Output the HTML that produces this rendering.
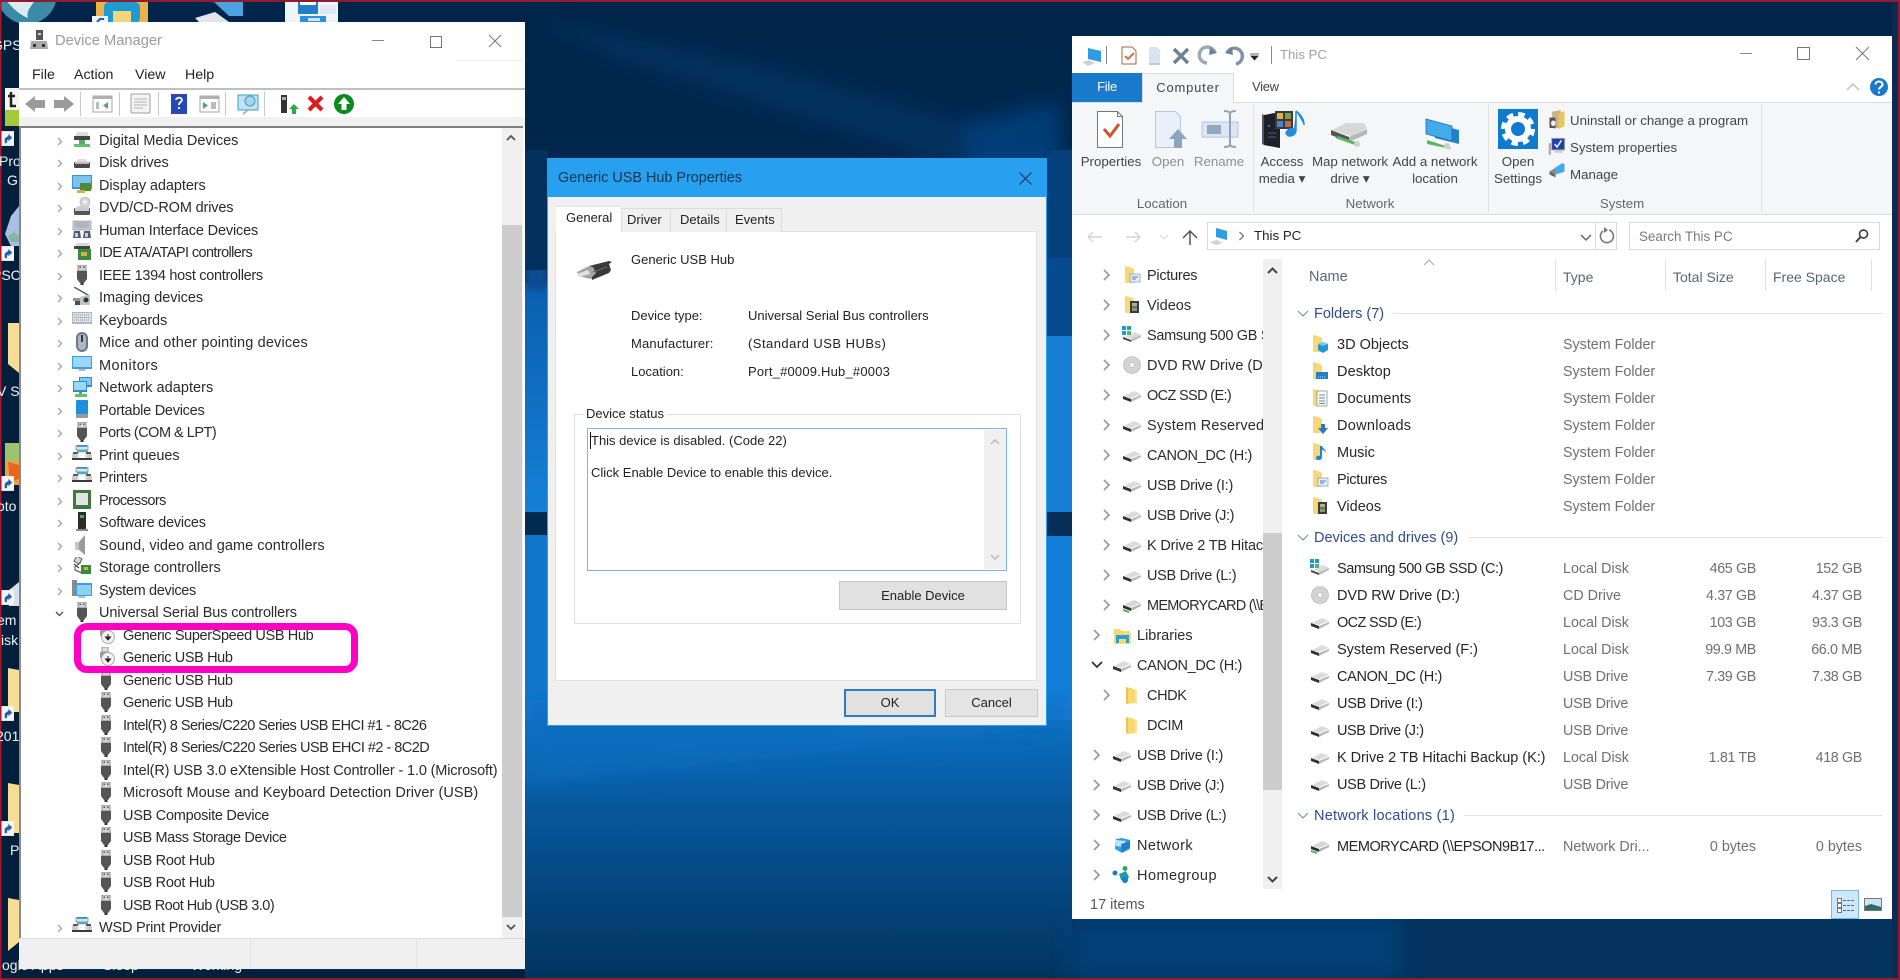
<!DOCTYPE html>
<html><head><meta charset="utf-8"><title>Device Manager</title>
<style>
html,body{margin:0;padding:0;width:1900px;height:980px;overflow:hidden;background:#02244a;font-family:"Liberation Sans",sans-serif}
.p{position:absolute}
.t{position:absolute;white-space:nowrap;line-height:20px;height:20px}
svg{position:absolute;overflow:visible}
#tree{position:absolute;left:0;top:129.75px;width:502px;height:809px;overflow:hidden;font-size:14.5px;color:#2a2a2a}
.r{position:relative;height:22.5px;line-height:22.5px;white-space:nowrap}
.r span{position:absolute;left:99px;top:0}
.r.k span{left:123px}
.r svg.c{left:57px;top:7px;width:6px;height:9px}
.r svg.i{left:72px;top:0;width:20px;height:20px}
.r.k svg.i{left:96px}
#nav{position:absolute;left:1072px;top:261px;width:191px;height:628px;overflow:hidden;font-size:14.5px;color:#2b2b2b}
.n{position:relative;height:30px;line-height:30px;white-space:nowrap}
.n span{position:absolute;left:75px;top:0}
.n svg.c{left:31px;top:8px;width:8px;height:12px}
.n svg.i{left:50px;top:4px;width:20px;height:20px}
.n.s span{left:65px}.n.s svg.c{left:21px}.n.s svg.i{left:40px}
.rb{font-size:13.3px;color:#444;text-align:center}
.dis{color:#8f8f8f}
.hd{font-size:14px;color:#56677a}
.grp{font-size:14.5px;color:#2f4b8c}
.it{font-size:14.5px;color:#262626;left:1337px}
.ty{font-size:14.3px;color:#6f6f6f;left:1563px}
.sz{font-size:14.3px;color:#6f6f6f;text-align:right;width:80px;left:1676px;letter-spacing:-.35px}
.fr{font-size:14.3px;color:#6f6f6f;text-align:right;width:80px;left:1782px;letter-spacing:-.35px}
.ln{position:absolute;height:1px;background:#e3e3e3}
.de{font-size:14px;color:#f2f2f2}
.d{font-size:13px;color:#222}
</style></head><body>

<!-- Wallpaper -->
<svg style="left:0;top:0" width="1900" height="980" viewBox="0 0 1900 980">
<defs>
<linearGradient id="bg" x1="0" y1="0" x2="0" y2="1"><stop offset="0" stop-color="#01254a"/><stop offset="1" stop-color="#033058"/></linearGradient>
<linearGradient id="pane" x1="0" y1="0" x2="0" y2="1"><stop offset="0" stop-color="#0a5eae"/><stop offset="1" stop-color="#1580d8"/></linearGradient>
<linearGradient id="low" x1="0" y1="0" x2="0" y2="1"><stop offset="0" stop-color="#0d70c2"/><stop offset=".35" stop-color="#07569a"/><stop offset="1" stop-color="#03335f"/></linearGradient>
<filter id="bl"><feGaussianBlur stdDeviation="10"/></filter>
<filter id="bl2"><feGaussianBlur stdDeviation="3"/></filter>
<symbol id="sc" viewBox="0 0 14 16"><rect width="14" height="16" fill="#f4f4f4"/><path d="M4 13V8l4-3V3l4 4-4 4V8.500L6.500 10.500V13z" fill="#1e5fb0"/></symbol>
<symbol id="ch" viewBox="0 0 6 9"><path d="M1 1l3.500 3.500L1 8" fill="none" stroke="#a6a6a6" stroke-width="1.400"/></symbol>
<symbol id="chd" viewBox="0 0 9 6"><path d="M1 1l3.500 3.500L8 1" fill="none" stroke="#555" stroke-width="1.400"/></symbol>
<symbol id="ch2" viewBox="0 0 8 12"><path d="M1 1l5 5-5 5" fill="none" stroke="#9c9c9c" stroke-width="1.800"/></symbol>
<symbol id="usb" viewBox="0 0 20 20"><rect x="6" y="0" width="8" height="6" fill="#d4d4d4" stroke="#777" stroke-width=".8"/><rect x="7.500" y="1.500" width="1.500" height="1.500" fill="#555"/><rect x="11" y="1.500" width="1.500" height="1.500" fill="#555"/><path d="M5 6h10v8l-3 4H8l-3-4z" fill="#555"/><rect x="8.500" y="18" width="3" height="2" fill="#333"/></symbol>
<symbol id="usbd" viewBox="0 0 20 20"><rect x="6" y="0" width="6" height="5" fill="#ddd" stroke="#888" stroke-width=".8"/><path d="M4 5h10v6H4z" fill="#9a9a9a"/><circle cx="12" cy="12" r="6.500" fill="#f2f2f2" stroke="#aaa"/><path d="M12 9v4M9.500 12h5l-2.500 3z" fill="#222" stroke="#222" stroke-width="1"/></symbol>
<symbol id="dig" viewBox="0 0 20 20"><path d="M3 6l2-4h10l2 4z" fill="#dcdcdc"/><rect x="2" y="6" width="16" height="4" fill="#444"/><rect x="7" y="10" width="6" height="4" fill="#50b060"/><rect x="2" y="14" width="16" height="3" fill="#62c070"/></symbol>
<symbol id="dsk" viewBox="0 0 20 20"><path d="M4 10l2-3h8l2 3z" fill="#dcdcdc"/><rect x="2" y="10" width="16" height="6" rx="1" fill="#4a4a4a"/><rect x="3" y="10" width="14" height="2" fill="#bbb"/></symbol>
<symbol id="dis" viewBox="0 0 20 20"><rect x="0" y="0" width="20" height="14" fill="#3a93d8"/><rect x="1" y="1" width="18" height="11" fill="#7cc4ee"/><rect x="8" y="8" width="11" height="8" fill="#4f8a3a"/><rect x="5" y="15" width="8" height="3" fill="#d7b048"/></symbol>
<symbol id="dvd" viewBox="0 0 20 20"><circle cx="13" cy="5" r="5" fill="#d7d7d7" stroke="#aaa" stroke-width=".6"/><circle cx="13" cy="5" r="1.500" fill="#fff"/><path d="M4 11l2-2h10l2 2z" fill="#cfcfcf"/><rect x="2" y="11" width="16" height="7" rx="1" fill="#555"/><rect x="3" y="11" width="14" height="3" fill="#ccc"/></symbol>
<symbol id="hid" viewBox="0 0 20 20"><rect x="1" y="1" width="18" height="9" fill="#c9ced6" stroke="#889" stroke-width=".6"/><path d="M3 3h14M3 5h14M3 7h14" stroke="#889" stroke-width=".8"/><path d="M1 18l1-7h6l1 7zM11 18l1-7h6l1 7z" fill="#4b5d73"/><rect x="3" y="13" width="3" height="4" fill="#c5d2e2"/><rect x="13" y="13" width="3" height="4" fill="#c5d2e2"/></symbol>
<symbol id="ide" viewBox="0 0 20 20"><path d="M3 4l2-3h12l1 3z" fill="#d9d9d9"/><rect x="2" y="4" width="16" height="3" fill="#444"/><rect x="6" y="7" width="13" height="11" fill="#3d8a3c"/><rect x="9" y="10" width="6" height="4" fill="#d0b14b"/></symbol>
<symbol id="img" viewBox="0 0 20 20"><path d="M2 0l14 8" stroke="#555" stroke-width="1.300"/><path d="M8 10l10-3v11H8z" fill="#bfc5cc"/><circle cx="14" cy="13" r="2.500" fill="#333"/><rect x="1" y="11" width="7" height="3" fill="#8c97a3"/><rect x="3" y="14" width="5" height="4" fill="#46505a"/></symbol>
<symbol id="kbd" viewBox="0 0 20 20"><rect x="0" y="2" width="20" height="12" fill="#aeb6c0"/><rect x="1" y="3" width="18" height="9" fill="#e0e4e9"/><path d="M2 5h16M2 7.500h16M2 10h16" stroke="#8b95a0" stroke-dasharray="1.200 .8"/></symbol>
<symbol id="mse" viewBox="0 0 20 20"><rect x="4" y="0" width="12" height="20" rx="6" fill="#6c7783"/><rect x="6" y="2" width="8" height="16" rx="4" fill="#aeb8c4"/><rect x="9" y="3" width="2" height="7" fill="#2f3a48"/></symbol>
<symbol id="mon" viewBox="0 0 20 20"><rect x="0" y="1" width="20" height="13" fill="#3a9ee0"/><rect x="1" y="2" width="18" height="10" fill="#9ad8f6"/><path d="M7 14h6l1 2H6z" fill="#bbb"/></symbol>
<symbol id="net" viewBox="0 0 20 20"><rect x="7" y="0" width="13" height="10" fill="#2f8dd5"/><rect x="8" y="1" width="11" height="7" fill="#84c8f0"/><rect x="1" y="4" width="14" height="11" fill="#2f8dd5"/><rect x="2" y="5" width="12" height="8" fill="#9ad8f6"/><rect x="3" y="17" width="12" height="3" fill="#62c070"/><rect x="7" y="15" width="3" height="2" fill="#888"/></symbol>
<symbol id="por" viewBox="0 0 20 20"><rect x="4" y="0" width="12" height="18" rx="1" fill="#1f8fe0"/><rect x="4" y="14" width="12" height="4" fill="#999"/></symbol>
<symbol id="prt" viewBox="0 0 20 20"><rect x="4" y="0" width="12" height="5" fill="#dbe2ea" stroke="#667" stroke-width=".6"/><path d="M5 1h10" stroke="#1f8ec6" stroke-width="1.500"/><rect x="5" y="5" width="11" height="2" fill="#40b1cf"/><rect x="1" y="7" width="5" height="2" fill="#555"/><rect x="14" y="7" width="5" height="2" fill="#555"/><rect x="6" y="7" width="8" height="7" fill="#fff" stroke="#888" stroke-width=".5"/><rect x="0" y="9" width="5" height="6" fill="#cbcbcb"/><rect x="15" y="9" width="5" height="6" fill="#cbcbcb"/><rect x="0" y="13" width="20" height="2" fill="#3b3b3b"/></symbol>
<symbol id="cpu" viewBox="0 0 20 20"><rect x="1" y="0" width="18" height="19" fill="#3e7a3d"/><rect x="4" y="3" width="12" height="12" fill="#e1e4e3"/></symbol>
<symbol id="sft" viewBox="0 0 20 20"><rect x="6" y="0" width="8" height="17" fill="#2b2b2b"/><rect x="8" y="3" width="4" height="3" fill="#4ab04a"/><rect x="4" y="17" width="12" height="2" fill="#888"/></symbol>
<symbol id="snd" viewBox="0 0 20 20"><path d="M3 7h4l6-7v20l-6-5H3z" fill="#c5c5c5"/><path d="M7 7l6-7v20l-6-5z" fill="#9a9a9a"/></symbol>
<symbol id="sto" viewBox="0 0 20 20"><rect x="3" y="0" width="6" height="6" transform="rotate(30 6 3)" fill="#d5d5d5" stroke="#444" stroke-width=".8"/><path d="M2 7l5 4" stroke="#444" stroke-width="1.200"/><path d="M9 5l-6 5v3l7 3" fill="none" stroke="#666" stroke-width="1.300"/><rect x="9" y="8" width="10" height="9" fill="#3d8a3c"/><rect x="12" y="10" width="4" height="3" fill="#d0b14b"/></symbol>
<symbol id="sys" viewBox="0 0 20 20"><rect x="0" y="0" width="5" height="16" fill="#8a8a8a"/><rect x="4" y="3" width="16" height="13" fill="#3a9ee0"/><rect x="5" y="5" width="14" height="10" fill="#8cd0f2"/><path d="M7 16h6l1 2H6z" fill="#bbb"/></symbol>
<symbol id="drv" viewBox="0 0 20 20"><path d="M2 11l10-5 7 3-10 4z" fill="#dcdcdc"/><path d="M1 11l8 3v3l-8-3z" fill="#303030"/><path d="M9 14l10-4v2l-10 5z" fill="#b8b8b8"/></symbol>
<symbol id="drvn" viewBox="0 0 20 20"><path d="M2 10l10-5 7 3-10 4z" fill="#d6d6d6"/><path d="M1 10l8 3v3l-8-3z" fill="#303030"/><path d="M9 13l10-4v2l-10 5z" fill="#b0b0b0"/><path d="M1 14l6 2v2l-6-2z" fill="#4fae55"/></symbol>
<symbol id="sam" viewBox="0 0 20 20"><path d="M3 12l10-5 6 3-10 4z" fill="#dcdcdc"/><path d="M1 12l8 3v2l-8-3z" fill="#444"/><path d="M9 14l10-4v2l-10 5z" fill="#bbb"/><rect x="0" y="1" width="4" height="4" fill="#1d9ad6"/><rect x="5" y="1" width="4" height="4" fill="#1d9ad6"/><rect x="0" y="6" width="4" height="4" fill="#1d9ad6"/><rect x="5" y="6" width="4" height="4" fill="#4cba6a"/></symbol>
<symbol id="cd" viewBox="0 0 20 20"><circle cx="10" cy="10" r="8.500" fill="#d3d3d3" stroke="#b0b0b0" stroke-width=".6"/><circle cx="10" cy="10" r="2.500" fill="#f5f5f5" stroke="#aaa" stroke-width=".5"/></symbol>
<symbol id="fld" viewBox="0 0 20 20"><path d="M4 2l5 1 5 2v13l-9 1-1-1z" fill="#f6d877"/><path d="M4 2v16l2 1V3z" fill="#efc14d"/><path d="M13 5h2v13h-2z" fill="#f9e59c"/></symbol>
<symbol id="fp" viewBox="0 0 20 20"><path d="M3 1l5 1 4 2v14H4l-1-1z" fill="#f6d877"/><rect x="8" y="9" width="10" height="8" fill="#e9eef5" stroke="#8296ad" stroke-width=".7"/><path d="M10 12h6M10 14h4" stroke="#4a7fb6"/></symbol>
<symbol id="fv" viewBox="0 0 20 20"><path d="M3 1l5 1 4 2v14H4l-1-1z" fill="#f6d877"/><rect x="8" y="6" width="9" height="12" fill="#3c3c3c"/><rect x="10" y="8" width="5" height="3.500" fill="#a5b28c"/><rect x="10" y="12.500" width="5" height="3.500" fill="#869b6b"/></symbol>
<symbol id="f3" viewBox="0 0 20 20"><path d="M3 1l5 1 4 2v14H4l-1-1z" fill="#f6d877"/><path d="M8 10l5-2 5 2v6l-5 3-5-3z" fill="#1e97d6"/><path d="M8 10l5-2 5 2-5 2z" fill="#76cbee"/></symbol>
<symbol id="fd" viewBox="0 0 20 20"><path d="M3 1l5 1 4 2v14H4l-1-1z" fill="#f6d877"/><rect x="6" y="11" width="12" height="7" fill="#1d81cf"/><path d="M8 16h8" stroke="#cde" stroke-dasharray="1 1"/></symbol>
<symbol id="fdoc" viewBox="0 0 20 20"><path d="M3 1l5 1 4 2v14H4l-1-1z" fill="#f6d877"/><rect x="7" y="3" width="10" height="15" fill="#fff" stroke="#8e8e8e" stroke-width=".8"/><path d="M9 7h6M9 10h6M9 13h6M9 15.500h6" stroke="#5e84a8"/></symbol>
<symbol id="fdn" viewBox="0 0 20 20"><path d="M3 1l5 1 4 2v14H4l-1-1z" fill="#f6d877"/><path d="M11 9h4v4h3l-5 6-5-6h3z" fill="#2b78c5"/></symbol>
<symbol id="fm" viewBox="0 0 20 20"><path d="M3 1l5 1 4 2v14H4l-1-1z" fill="#f6d877"/><path d="M10 4h2c1 3 4 3 4 7-1-2-2-3-4-3v7c0 2-2 3-4 3-1.500 0-2-1-2-2 0-2 3-3 4-2z" fill="#1f83d8"/></symbol>
</defs>
<rect width="1900" height="980" fill="url(#bg)"/>
<path d="M520 15L780 70 1060 150 1060 200 860 135 620 60z" fill="#0a4e90" opacity=".28" filter="url(#bl)"/>
<path d="M960 125L1060 100V280H1000z" fill="#04437f" opacity=".8" filter="url(#bl)"/>
<path d="M525 283H548V512H525z" fill="url(#pane)"/>
<path d="M525 535H548V760H525z" fill="#1076cc"/>
<path d="M525 262H548V290H525z" fill="#074c92" filter="url(#bl2)"/>
<path d="M525 150H548V270H525z" fill="#03315e"/>
<path d="M1047 150H1073V260H1047z" fill="#05407c"/>
<path d="M1047 258H1073V336H1047z" fill="#074a8e"/>
<path d="M1047 336H1073V512H1047z" fill="#1780d6"/>
<path d="M1047 536H1073V720H1047z" fill="#137ed8"/>
<path d="M1047 512H1073V536H1047z" fill="#062e56"/>
<rect x="525" y="720" width="548" height="260" fill="url(#low)"/>
<path d="M525 785L1072 725V700H525z" fill="#0c6dc0" opacity=".7" filter="url(#bl)"/>
<path d="M1072 915H1892V980H1072z" fill="#04335f"/>
<path d="M1072 915H1400V980H1072z" fill="#054480" opacity=".7" filter="url(#bl)"/>
<path d="M1892 0H1900V980H1892z" fill="#0a2c54"/>
<path d="M0 0H19V980H0z" fill="#02203c"/>
<rect x="0" y="970" width="525" height="10" fill="#02203c"/>
<circle cx="27" cy="-6" r="30" fill="#3d8aa8"/><path d="M6 0c6 8 14 15 22 18-2-7 3-11 7-18z" fill="#dcebf0"/>
<rect x="96" y="0" width="52" height="23" fill="#eeb24a"/><rect x="104" y="2" width="36" height="21" rx="5" fill="#1e9bd0"/><rect x="113" y="11" width="18" height="12" fill="#f3d67b"/>
<rect x="92" y="16" width="16" height="7" fill="#eef2f7"/><path d="M97 22l3-3h4" stroke="#1e5fb0" stroke-width="2" fill="none"/>
<path d="M212 0h31v16h-14z" fill="#4ba4e0"/><path d="M195 18l20-6 14 10H199z" fill="#e2e6ea"/>
<rect x="285" y="0" width="53" height="23" fill="#f0f3f7"/><rect x="298" y="0" width="20" height="14" fill="#1f7fc8"/><rect x="300" y="2" width="16" height="3" fill="#fff"/><rect x="320" y="5" width="16" height="9" fill="#dfe8f2"/><rect x="300" y="16" width="26" height="7" fill="#2a92dc"/><rect x="308" y="18" width="12" height="3" fill="#cfe6f8"/>
<rect x="5" y="88" width="14" height="22" fill="#f5f5f0"/><rect x="5" y="110" width="14" height="16" fill="#a3c83c"/>
<path d="M11 92v14h5M8 96h7" stroke="#222" stroke-width="2.500" fill="none"/>
<use href="#sc" x="1" y="131" width="13" height="15"/>
<path d="M19 206l-8 10-6 18 6 12h8z" fill="#aabfe6"/><path d="M8 236l6-4 5 4v6h-8z" fill="#84b89c"/>
<use href="#sc" x="1" y="246" width="13" height="15"/>
<path d="M8 323h11v50l-11-9z" fill="#f5dd94"/>
<rect x="5" y="443" width="14" height="42" fill="#e8a04a"/><rect x="5" y="443" width="14" height="18" fill="#9cc36e"/><path d="M8 462l11 3v14l-9 3z" fill="#e9661f"/>
<use href="#sc" x="1" y="476" width="13" height="15"/>
<path d="M19 582L9 590v16h10z" fill="#d5dfec"/>
<use href="#sc" x="1" y="590" width="13" height="15"/>
<path d="M8 668l11 2v42H8z" fill="#f5dd94"/><use href="#sc" x="1" y="706" width="13" height="15"/>
<path d="M8 783l11 2v48H8z" fill="#f5dd94"/><use href="#sc" x="1" y="821" width="13" height="15"/>
<path d="M8 898l11 2v42l-11 9z" fill="#f5dd94"/>
<rect x="0" y="0" width="1900" height="2" fill="#8c1c30"/>
<rect x="0" y="978" width="1900" height="2" fill="#8c1c30"/>
<rect x="0" y="0" width="1.500" height="980" fill="#a8152c"/>
<rect x="1898" y="0" width="2" height="980" fill="#8c1c30"/>
</svg>

<!-- Desktop labels -->
<div class="t de" style="left:-8px;top:35px">GPS</div>
<div class="t de" style="left:-1px;top:151px">Pro</div>
<div class="t de" style="left:7px;top:170px">G</div>
<div class="t de" style="left:-8px;top:265px">PSC</div>
<div class="t de" style="left:-3px;top:381px">V S</div>
<div class="t de" style="left:-3px;top:496px">oto</div>
<div class="t de" style="left:-3px;top:610px">em</div>
<div class="t de" style="left:1px;top:630px">isk</div>
<div class="t de" style="left:-4px;top:726px">201</div>
<div class="t de" style="left:10px;top:840px">P</div>
<div class="t de" style="left:2px;top:955px">ogle Apps</div>
<div class="t de" style="left:103px;top:955px">Sleep</div>
<div class="t de" style="left:191px;top:955px">Working</div>

<!-- Device Manager -->
<div class="p" style="left:19px;top:22px;width:506px;height:947px;background:#fff"></div>
<div class="p" style="left:19px;top:117px;width:506px;height:9px;background:#f1f1f1"></div>
<div class="p" style="left:19px;top:88px;width:506px;height:2px;background:#c0c0c0"></div>
<div class="p" style="left:21px;top:126px;width:502px;height:2px;background:#808080"></div>
<div class="p" style="left:19px;top:126px;width:2px;height:812px;background:#8a8a8a"></div>
<div class="p" style="left:456px;top:60px;width:69px;height:1px;background:#eee"></div>
<div class="p" style="left:19px;top:938px;width:506px;height:31px;background:#f0f0f0;border-top:1px solid #dcdcdc;box-sizing:border-box"></div>
<div class="p" style="left:250px;top:940px;width:1px;height:28px;background:#e2e2e2"></div>
<div class="p" style="left:416px;top:940px;width:1px;height:28px;background:#e2e2e2"></div>
<div class="p" style="left:502px;top:128px;width:21px;height:810px;background:#f0f0f0"></div>
<div class="p" style="left:502px;top:225px;width:20px;height:692px;background:#cdcdcd"></div>
<svg style="left:505px;top:134px" width="12" height="8"><path d="M2 6l4-4 4 4" fill="none" stroke="#555" stroke-width="1.800"/></svg>
<svg style="left:505px;top:923px" width="12" height="8"><path d="M2 2l4 4 4-4" fill="none" stroke="#555" stroke-width="1.800"/></svg>
<div class="t" style="left:55px;top:31px;font-size:14.7px;color:#9b9b9b">Device Manager</div>
<svg style="left:29px;top:30px" width="20" height="21" viewBox="0 0 20 21"><rect x="7" y="0" width="7" height="10" fill="#555"/><rect x="9" y="3" width="3" height="2" fill="#ccc"/><path d="M2 11h16l1 8H1z" fill="#aaa"/><rect x="4" y="14" width="3" height="3" fill="#333"/><rect x="13" y="14" width="3" height="3" fill="#333"/></svg>
<svg style="left:372px;top:34px" width="150" height="16"><path d="M0 6.500h12" stroke="#888"/><rect x="58.500" y="2.500" width="11" height="11" fill="none" stroke="#777"/><path d="M117 1l12 12M129 1l-12 12" stroke="#777"/></svg>
<div class="t" style="left:32px;top:65px;font-size:14.2px;color:#222">File</div>
<div class="t" style="left:74px;top:65px;font-size:14.2px;color:#222">Action</div>
<div class="t" style="left:135px;top:65px;font-size:14.2px;color:#222">View</div>
<div class="t" style="left:185px;top:65px;font-size:14.2px;color:#222">Help</div>
<svg style="left:19px;top:90px" width="400" height="28" viewBox="0 0 400 28">
<path d="M6 14l10-8v4h10v8H16v4z" fill="#9b9b9b"/><path d="M55 14L45 6v4H35v8h10v4z" fill="#9b9b9b"/>
<path d="M61.500 2v24M100.500 2v24M139.500 2v24M206.500 2v24M245.500 2v24" stroke="#c8c8c8"/>
<rect x="74" y="6" width="19" height="16" fill="#fff" stroke="#a5a5a5"/><rect x="74" y="6" width="19" height="3" fill="#b0b0b0"/><path d="M77 12h3v7h-3z" fill="#bbb"/><path d="M89 12v7l-5-3.500z" fill="#4faa58"/>
<rect x="112" y="4" width="19" height="19" rx="1" fill="#f4f4f4" stroke="#9e9e9e"/><path d="M115 9h13M115 12h13M115 15h13M115 18h9" stroke="#b3b3b3"/>
<rect x="152" y="4" width="16" height="20" fill="#2649b5"/><path d="M157 10c0-3 6-3 6 0 0 2-3 2-3 5M160 17v2" stroke="#fff" stroke-width="1.800" fill="none"/>
<rect x="181" y="6" width="19" height="16" fill="#fff" stroke="#a5a5a5"/><rect x="181" y="6" width="19" height="3" fill="#b0b0b0"/><path d="M184 12v7l5-3.500z" fill="#4faa58"/><path d="M192 12h5v7h-5z" fill="#bbb"/>
<rect x="219" y="5" width="20" height="15" fill="#bfe3f5" stroke="#3e9bcf"/><circle cx="231" cy="11" r="5" fill="#a4d4ee" stroke="#3e9bcf"/><path d="M224 24l5-4h9" stroke="#9aa" stroke-width="1.500" fill="none"/>
<rect x="262" y="5" width="6" height="18" fill="#333"/><rect x="263" y="7" width="4" height="3" fill="#8bc58a"/><path d="M270 19l5-5 5 5h-3v5h-4v-5z" fill="#2fa84f"/>
<path d="M290 7l13 13M303 7l-13 13" stroke="#d81e1e" stroke-width="4.200"/>
<circle cx="325" cy="14" r="10" fill="#0a8a1f"/><path d="M325 7l6 7h-3.500v6h-5v-6H319z" fill="#fff"/>
</svg>

<div id="tree">
<div class="r"><svg class="c"><use href="#ch"/></svg><svg class="i"><use href="#dig"/></svg><span>Digital Media Devices</span></div>
<div class="r"><svg class="c"><use href="#ch"/></svg><svg class="i"><use href="#dsk"/></svg><span style="letter-spacing:-.12px">Disk drives</span></div>
<div class="r"><svg class="c"><use href="#ch"/></svg><svg class="i"><use href="#dis"/></svg><span style="letter-spacing:-.08px">Display adapters</span></div>
<div class="r"><svg class="c"><use href="#ch"/></svg><svg class="i"><use href="#dvd"/></svg><span style="letter-spacing:-.15px">DVD/CD-ROM drives</span></div>
<div class="r"><svg class="c"><use href="#ch"/></svg><svg class="i"><use href="#hid"/></svg><span style="letter-spacing:-.16px">Human Interface Devices</span></div>
<div class="r"><svg class="c"><use href="#ch"/></svg><svg class="i"><use href="#ide"/></svg><span style="letter-spacing:-.6px">IDE ATA/ATAPI controllers</span></div>
<div class="r"><svg class="c"><use href="#ch"/></svg><svg class="i"><use href="#usb"/></svg><span style="letter-spacing:-.3px">IEEE 1394 host controllers</span></div>
<div class="r"><svg class="c"><use href="#ch"/></svg><svg class="i"><use href="#img"/></svg><span style="letter-spacing:-.05px">Imaging devices</span></div>
<div class="r"><svg class="c"><use href="#ch"/></svg><svg class="i"><use href="#kbd"/></svg><span style="letter-spacing:-.14px">Keyboards</span></div>
<div class="r"><svg class="c"><use href="#ch"/></svg><svg class="i"><use href="#mse"/></svg><span style="letter-spacing:.16px">Mice and other pointing devices</span></div>
<div class="r"><svg class="c"><use href="#ch"/></svg><svg class="i"><use href="#mon"/></svg><span style="letter-spacing:.45px">Monitors</span></div>
<div class="r"><svg class="c"><use href="#ch"/></svg><svg class="i"><use href="#net"/></svg><span style="letter-spacing:.04px">Network adapters</span></div>
<div class="r"><svg class="c"><use href="#ch"/></svg><svg class="i"><use href="#por"/></svg><span style="letter-spacing:-.26px">Portable Devices</span></div>
<div class="r"><svg class="c"><use href="#ch"/></svg><svg class="i"><use href="#usb"/></svg><span style="letter-spacing:-.5px">Ports (COM &amp; LPT)</span></div>
<div class="r"><svg class="c"><use href="#ch"/></svg><svg class="i"><use href="#prt"/></svg><span style="letter-spacing:-.07px">Print queues</span></div>
<div class="r"><svg class="c"><use href="#ch"/></svg><svg class="i"><use href="#prt"/></svg><span style="letter-spacing:-.22px">Printers</span></div>
<div class="r"><svg class="c"><use href="#ch"/></svg><svg class="i"><use href="#cpu"/></svg><span style="letter-spacing:-.57px">Processors</span></div>
<div class="r"><svg class="c"><use href="#ch"/></svg><svg class="i"><use href="#sft"/></svg><span style="letter-spacing:-.23px">Software devices</span></div>
<div class="r"><svg class="c"><use href="#ch"/></svg><svg class="i"><use href="#snd"/></svg><span style="letter-spacing:.05px">Sound, video and game controllers</span></div>
<div class="r"><svg class="c"><use href="#ch"/></svg><svg class="i"><use href="#sto"/></svg><span>Storage controllers</span></div>
<div class="r"><svg class="c"><use href="#ch"/></svg><svg class="i"><use href="#sys"/></svg><span style="letter-spacing:-.33px">System devices</span></div>
<div class="r"><svg class="c" style="left:55px;top:9px;width:9px;height:6px"><use href="#chd"/></svg><svg class="i"><use href="#usb"/></svg><span style="letter-spacing:-.11px">Universal Serial Bus controllers</span></div>
<div class="r k"><svg class="i"><use href="#usbd"/></svg><span style="letter-spacing:-.37px">Generic SuperSpeed USB Hub</span></div>
<div class="r k"><svg class="i"><use href="#usbd"/></svg><span style="letter-spacing:-.38px">Generic USB Hub</span></div>
<div class="r k"><svg class="i"><use href="#usb"/></svg><span style="letter-spacing:-.38px">Generic USB Hub</span></div>
<div class="r k"><svg class="i"><use href="#usb"/></svg><span style="letter-spacing:-.38px">Generic USB Hub</span></div>
<div class="r k"><svg class="i"><use href="#usb"/></svg><span style="letter-spacing:-.53px">Intel(R) 8 Series/C220 Series USB EHCI #1 - 8C26</span></div>
<div class="r k"><svg class="i"><use href="#usb"/></svg><span style="letter-spacing:-.52px">Intel(R) 8 Series/C220 Series USB EHCI #2 - 8C2D</span></div>
<div class="r k"><svg class="i"><use href="#usb"/></svg><span style="letter-spacing:-.15px">Intel(R) USB 3.0 eXtensible Host Controller - 1.0 (Microsoft)</span></div>
<div class="r k"><svg class="i"><use href="#usb"/></svg><span style="letter-spacing:.06px">Microsoft Mouse and Keyboard Detection Driver (USB)</span></div>
<div class="r k"><svg class="i"><use href="#usb"/></svg><span style="letter-spacing:-.27px">USB Composite Device</span></div>
<div class="r k"><svg class="i"><use href="#usb"/></svg><span style="letter-spacing:-.35px">USB Mass Storage Device</span></div>
<div class="r k"><svg class="i"><use href="#usb"/></svg><span style="letter-spacing:-.29px">USB Root Hub</span></div>
<div class="r k"><svg class="i"><use href="#usb"/></svg><span style="letter-spacing:-.29px">USB Root Hub</span></div>
<div class="r k"><svg class="i"><use href="#usb"/></svg><span style="letter-spacing:-.53px">USB Root Hub (USB 3.0)</span></div>
<div class="r"><svg class="c"><use href="#ch"/></svg><svg class="i"><use href="#prt"/></svg><span style="letter-spacing:-.2px">WSD Print Provider</span></div>
</div>
<div class="p" style="left:74px;top:623px;width:284px;height:50px;box-sizing:border-box;border:7px solid #ff00c4;border-radius:13px"></div>

<!-- Dialog -->
<div class="p" style="left:547px;top:158px;width:500px;height:568px;background:#f0f0f0;box-shadow:inset 0 0 0 1px #2a9fee"></div>
<div class="p" style="left:547px;top:158px;width:500px;height:39px;background:#27a0ef"></div>
<div class="t" style="left:558px;top:168px;font-size:14.4px;color:#17364f">Generic USB Hub Properties</div>
<svg style="left:1019px;top:172px" width="13" height="13"><path d="M.5.500l12 12M12.500.500l-12 12" stroke="#17364f" stroke-width="1.100"/></svg>
<div class="p" style="left:556px;top:232px;width:480px;height:448px;background:#fff;box-shadow:0 0 0 1px #e2e2e2"></div>
<div class="p" style="left:621px;top:208px;width:50px;height:24px;background:#f0f0f0;border:1px solid #dcdcdc;border-bottom:0;box-sizing:border-box"></div>
<div class="p" style="left:671px;top:208px;width:56px;height:24px;background:#f0f0f0;border:1px solid #dcdcdc;border-bottom:0;border-left:0;box-sizing:border-box"></div>
<div class="p" style="left:727px;top:208px;width:55px;height:24px;background:#f0f0f0;border:1px solid #dcdcdc;border-bottom:0;border-left:0;box-sizing:border-box"></div>
<div class="p" style="left:556px;top:207px;width:65px;height:26px;background:#fff;box-shadow:0 -1px 0 #e2e2e2"></div>
<div class="t d" style="left:566px;top:208px">General</div>
<div class="t d" style="left:627px;top:210px">Driver</div>
<div class="t d" style="left:680px;top:210px">Details</div>
<div class="t d" style="left:735px;top:210px">Events</div>
<svg style="left:575px;top:258px" width="40" height="24" viewBox="0 0 40 24"><path d="M14 8l20-5 3 1-3 2 2 6-2 3-17 7z" fill="#3a3a3a"/><path d="M2 14l12-6 4 1 3 6-6 6-11-3z" fill="#a6a6a6"/><path d="M2 16l11-4 2 4-11 3z" fill="#e2e2e2"/><path d="M18 14l14-5" stroke="#666"/></svg>
<div class="t d" style="left:631px;top:250px">Generic USB Hub</div>
<div class="t d" style="left:631px;top:306px">Device type:</div>
<div class="t d" style="left:748px;top:306px">Universal Serial Bus controllers</div>
<div class="t d" style="left:631px;top:334px;letter-spacing:.18px">Manufacturer:</div>
<div class="t d" style="left:748px;top:334px;letter-spacing:.47px">(Standard USB HUBs)</div>
<div class="t d" style="left:631px;top:362px">Location:</div>
<div class="t d" style="left:748px;top:362px;letter-spacing:.2px">Port_#0009.Hub_#0003</div>
<div class="p" style="left:574px;top:414px;width:447px;height:210px;border:1px solid #dfdfdf;box-sizing:border-box"></div>
<div class="t d" style="left:584px;top:404px;background:#fff;padding:0 2px">Device status</div>
<div class="p" style="left:587px;top:428px;width:420px;height:143px;border:1px solid #7fb4de;box-sizing:border-box;background:#fff"></div>
<div class="p" style="left:984px;top:430px;width:22px;height:139px;background:#f0f0f0"></div>
<svg style="left:989px;top:438px" width="12" height="8"><path d="M2 6l4-4 4 4" fill="none" stroke="#c2c2c2" stroke-width="1.800"/></svg>
<svg style="left:989px;top:553px" width="12" height="8"><path d="M2 2l4 4 4-4" fill="none" stroke="#c2c2c2" stroke-width="1.800"/></svg>
<div class="p" style="left:590px;top:432px;width:1px;height:17px;background:#111"></div>
<div class="t d" style="left:591px;top:431px">This device is disabled. (Code 22)</div>
<div class="t d" style="left:591px;top:463px">Click Enable Device to enable this device.</div>
<div class="p" style="left:839px;top:581px;width:168px;height:29px;background:#e1e1e1;border:1px solid #c4c4c4;box-sizing:border-box;text-align:center;line-height:27px;font-size:13px;color:#222">Enable Device</div>
<div class="p" style="left:844px;top:689px;width:92px;height:28px;background:#e1e1e1;border:2px solid #2b7cc4;box-sizing:border-box;text-align:center;line-height:24px;font-size:13px;color:#222">OK</div>
<div class="p" style="left:945px;top:689px;width:93px;height:28px;background:#e4e4e4;border:1px solid #c8c8c8;box-sizing:border-box;text-align:center;line-height:26px;font-size:13px;color:#222">Cancel</div>

<!-- Explorer -->
<div class="p" style="left:1072px;top:36px;width:820px;height:883px;background:#fff"></div>
<div class="p" style="left:1072px;top:102px;width:820px;height:113px;background:#f5f6f7;border-top:1px solid #dadbdc;border-bottom:1px solid #dadbdc;box-sizing:border-box"></div>
<div class="p" style="left:1072px;top:73px;width:70px;height:29px;background:#1979ca;color:#fff;text-align:center;line-height:28px;font-size:13px;letter-spacing:-.3px">File</div>
<div class="p" style="left:1142px;top:73px;width:92px;height:30px;background:#f5f6f7;border:1px solid #dadbdc;border-bottom:0;box-sizing:border-box;text-align:center;line-height:28px;font-size:13px;color:#444;letter-spacing:.8px">Computer</div>
<div class="t" style="left:1252px;top:77px;font-size:13px;color:#444;letter-spacing:-.3px">View</div>
<div class="t" style="left:1280px;top:45px;font-size:13.2px;color:#a0a0a0">This PC</div>
<svg style="left:1740px;top:47px" width="130" height="14"><path d="M0 6.500h12" stroke="#888"/><rect x="57.500" y=".5" width="12" height="12" fill="none" stroke="#777"/><path d="M116 0l13 13M129 0l-13 13" stroke="#777"/></svg>
<svg style="left:1080px;top:44px" width="200" height="24" viewBox="0 0 200 24">
<path d="M8 4l13 3v11l-13-3z" fill="#2f9be0"/><path d="M2 18l7-2 6 3-7 3z" fill="#d2d2d2"/>
<path d="M26.500 2v18" stroke="#888"/>
<path d="M42 3h10l4 4v13H42z" fill="#fff" stroke="#9a6a4e"/><path d="M45 12l3 3 6-6" stroke="#d9622b" stroke-width="1.800" fill="none"/>
<path d="M69 3h8l3 3v15H69z" fill="#d9e4f2"/><path d="M69 19h11v2H69z" fill="#bcd"/>
<path d="M94 5l14 14M108 5L94 19" stroke="#6e8196" stroke-width="3.500"/>
<path d="M135 9a8 8 0 1 0-8 10" fill="none" stroke="#9aa8b8" stroke-width="3.400"/><path d="M130 3l7 6-8 2z" fill="#6e8196"/>
<path d="M147 9a8 8 0 1 1 9 11" fill="none" stroke="#7f93a8" stroke-width="3.400"/><path d="M152 3l-7 6 8 2z" fill="#6e8196"/>
<path d="M170 10h9M171 12h7l-3.500 4z" fill="#222" stroke="#333" stroke-width=".8"/>
<path d="M191.500 2v18" stroke="#888"/>
</svg>
<svg style="left:1845px;top:78px" width="46" height="20" viewBox="0 0 46 20"><path d="M2 12l6-6 6 6" fill="none" stroke="#bbb" stroke-width="1.300"/><circle cx="34" cy="9" r="9" fill="#1979ca"/><path d="M30.500 6.500c0-4 7-4 7 0 0 2.500-3.500 2.500-3.500 5M34 13.500v2" stroke="#fff" stroke-width="2" fill="none"/></svg>
<div class="p" style="left:1253px;top:104px;width:1px;height:108px;background:#e0e0e0"></div>
<div class="p" style="left:1488px;top:104px;width:1px;height:108px;background:#e0e0e0"></div>
<div class="p" style="left:1761px;top:104px;width:1px;height:108px;background:#e0e0e0"></div>
<svg style="left:1095px;top:108px" width="420" height="44" viewBox="0 0 420 44">
<path d="M2.500 3.500h20l5 5v31h-25z" fill="#fff" stroke="#777"/><path d="M22.500 3.500v5h5" fill="none" stroke="#777"/><path d="M9 21l6 7 9-12" stroke="#c9572a" stroke-width="3" fill="none"/>
<path d="M60.500 3.500h20l5 5v31h-25z" fill="#e8f0f9" stroke="#b4c6dc"/><path d="M74 31l9-10 9 10h-5v9h-8v-9z" fill="#8ea4bd"/>
<rect x="107" y="14" width="36" height="15" fill="#dbe6f2" stroke="#b4c6dc"/><rect x="112" y="17" width="14" height="9" fill="#93a8c0"/><path d="M129 3c4 0 6 1 6 3v30c0 2 2 3 6 3M141 3c-4 0-6 1-6 3M129 39c4 0 6-1 6-3" fill="none" stroke="#8ea4bd" stroke-width="2"/>
<path d="M169 7l16-3v36l-16-3z" fill="#1c2128"/><path d="M169 7l-2-1v30l2 1z" fill="#4e5863"/><circle cx="174" cy="18" r="1" fill="#3a8fd0"/><path d="M173 25h8M173 29h8" stroke="#3a6c8f"/><rect x="180" y="3" width="18" height="18" fill="#3a3a3a"/><rect x="182" y="5" width="6" height="6" fill="#d8b24a"/><rect x="190" y="5" width="6" height="6" fill="#7ba24a"/><rect x="182" y="13" width="6" height="6" fill="#4a86c5"/><rect x="190" y="13" width="6" height="6" fill="#c5674a"/><path d="M201 3c5 4 8 8 8 14M201 3v19c0 4-3 6-6 6s-5-3-3-5 5-3 7-2" fill="#1f8de0" stroke="#1f8de0" stroke-width="1.500"/>
<path d="M237 22l14-7h18l3 5-16 8z" fill="#d8d8d8"/><path d="M236 22l18 7v5l-18-7z" fill="#555"/><path d="M254 29l18-8v5l-18 8z" fill="#b7b7b7"/><path d="M240 30l20 7 3-2-20-7z" fill="#55b85f"/><circle cx="262" cy="36" r="3" fill="#cfcfcf"/>
<path d="M340 16l24 6v14l-24-6z" fill="#2182cc"/><path d="M331 11l26 7v15l-26-7z" fill="#43abe9" stroke="#1a70b3" stroke-width=".8"/><path d="M332 32l22 7 2 2-24-5z" fill="#55b85f"/><circle cx="352" cy="38" r="3" fill="#cfcfcf"/>
</svg>
<div class="p" style="left:1498px;top:109px;width:40px;height:40px;background:#0e7ad0"></div>
<svg style="left:1498px;top:109px" width="40" height="40" viewBox="0 0 40 40"><circle cx="20" cy="20" r="10" fill="none" stroke="#fff" stroke-width="6"/><circle cx="20" cy="20" r="14.500" fill="none" stroke="#fff" stroke-width="5" stroke-dasharray="6.400 5"/></svg>
<svg style="left:1548px;top:109px" width="18" height="76" viewBox="0 0 24 80" preserveAspectRatio="none">
<rect x="6" y="2" width="12" height="18" fill="#c9b48a" transform="rotate(-8 12 10)"/><rect x="2" y="9" width="8" height="11" fill="#555"/><circle cx="7" cy="15" r="3" fill="#eee"/><path d="M14 5l8-3v16l-8 3z" fill="#e7c65a"/>
<rect x="5" y="31" width="17" height="12" fill="#1e3fb0" stroke="#999"/><path d="M9 37l3 3 6-7" stroke="#fff" stroke-width="1.800" fill="none"/><path d="M10 43h8l2 3H8z" fill="#ccc"/><rect x="1" y="36" width="3" height="12" fill="#aaa"/>
<path d="M3 65l9-4 6 3-9 5z" fill="#888"/><path d="M9 62l10-5 3 1v8l-12 3z" fill="#43abe9"/><path d="M2 65l8 4v3l-8-3z" fill="#666"/>
</svg>
<div class="t rb" style="left:1071px;width:80px;top:152px">Properties</div>
<div class="t rb dis" style="left:1138px;width:60px;top:152px">Open</div>
<div class="t rb dis" style="left:1189px;width:60px;top:152px">Rename</div>
<div class="t rb" style="left:1252px;width:60px;top:152px">Access</div>
<div class="t rb" style="left:1252px;width:60px;top:169px">media ▾</div>
<div class="t rb" style="left:1300px;width:100px;top:152px">Map network</div>
<div class="t rb" style="left:1320px;width:60px;top:169px">drive ▾</div>
<div class="t rb" style="left:1380px;width:110px;top:152px">Add a network</div>
<div class="t rb" style="left:1395px;width:80px;top:169px">location</div>
<div class="t rb" style="left:1488px;width:60px;top:152px">Open</div>
<div class="t rb" style="left:1488px;width:60px;top:169px">Settings</div>
<div class="t rb" style="left:1570px;top:111px;text-align:left">Uninstall or change a program</div>
<div class="t rb" style="left:1570px;top:138px;text-align:left">System properties</div>
<div class="t rb" style="left:1570px;top:165px;text-align:left">Manage</div>
<div class="t rb" style="left:1122px;width:80px;top:194px;color:#666">Location</div>
<div class="t rb" style="left:1330px;width:80px;top:194px;color:#666">Network</div>
<div class="t rb" style="left:1582px;width:80px;top:194px;color:#666">System</div>
<svg style="left:1086px;top:228px" width="120" height="20" viewBox="0 0 120 20"><path d="M2 9h14M2 9l5-5M2 9l5 5" stroke="#d3d3d3" stroke-width="1.400" fill="none"/><path d="M40 9h14M54 9l-5-5M54 9l-5 5" stroke="#d3d3d3" stroke-width="1.400" fill="none"/><path d="M74 7l4 4 4-4" stroke="#d3d3d3" fill="none"/><path d="M104 17V3M97 10l7-7 7 7" stroke="#555" stroke-width="1.500" fill="none"/></svg>
<div class="p" style="left:1207px;top:222px;width:410px;height:28px;border:1px solid #d9d9d9;box-sizing:border-box"></div>
<svg style="left:1209px;top:226px" width="20" height="20" viewBox="0 0 20 20"><path d="M7 2l11 3v9L7 11z" fill="#2f9be0"/><path d="M1 16l7-2 6 3-7 2z" fill="#d2d2d2"/></svg>
<svg style="left:1238px;top:231px" width="8" height="10"><path d="M1.500 1l4 4-4 4" stroke="#666" stroke-width="1.200" fill="none"/></svg>
<div class="t" style="left:1254px;top:226px;font-size:13.3px;color:#222">This PC</div>
<svg style="left:1580px;top:234px" width="12" height="8"><path d="M1 1l5 5 5-5" stroke="#666" stroke-width="1.500" fill="none"/></svg>
<div class="p" style="left:1595px;top:222px;width:1px;height:28px;background:#d9d9d9"></div>
<svg style="left:1599px;top:227px" width="17" height="18" viewBox="0 0 17 18"><path d="M10 3a6.500 6.500 0 1 1-6 1" stroke="#777" stroke-width="1.600" fill="none"/><path d="M9 0l-4 3 4 3z" fill="#777" transform="rotate(180 7 3)"/></svg>
<div class="p" style="left:1629px;top:222px;width:251px;height:28px;border:1px solid #d9d9d9;box-sizing:border-box"></div>
<div class="t" style="left:1639px;top:227px;font-size:13.4px;color:#7a7a7a">Search This PC</div>
<svg style="left:1854px;top:228px" width="16" height="16" viewBox="0 0 16 16"><circle cx="9.500" cy="6" r="4" fill="none" stroke="#444" stroke-width="1.700"/><path d="M6.500 9L2 14" stroke="#444" stroke-width="2"/></svg>
<div id="nav">
<div class="n"><svg class="c"><use href="#ch2"/></svg><svg class="i"><use href="#fp"/></svg><span style="letter-spacing:-.26px">Pictures</span></div>
<div class="n"><svg class="c"><use href="#ch2"/></svg><svg class="i"><use href="#fv"/></svg><span>Videos</span></div>
<div class="n"><svg class="c"><use href="#ch2"/></svg><svg class="i"><use href="#sam"/></svg><span style="letter-spacing:-.31px">Samsung 500 GB SSD (C:)</span></div>
<div class="n"><svg class="c"><use href="#ch2"/></svg><svg class="i"><use href="#cd"/></svg><span>DVD RW Drive (D:)</span></div>
<div class="n"><svg class="c"><use href="#ch2"/></svg><svg class="i"><use href="#drv"/></svg><span style="letter-spacing:-.65px">OCZ SSD (E:)</span></div>
<div class="n"><svg class="c"><use href="#ch2"/></svg><svg class="i"><use href="#drv"/></svg><span style="letter-spacing:.19px">System Reserved (F:)</span></div>
<div class="n"><svg class="c"><use href="#ch2"/></svg><svg class="i"><use href="#drv"/></svg><span style="letter-spacing:-.35px">CANON_DC (H:)</span></div>
<div class="n"><svg class="c"><use href="#ch2"/></svg><svg class="i"><use href="#drv"/></svg><span style="letter-spacing:-.24px">USB Drive (I:)</span></div>
<div class="n"><svg class="c"><use href="#ch2"/></svg><svg class="i"><use href="#drv"/></svg><span style="letter-spacing:-.4px">USB Drive (J:)</span></div>
<div class="n"><svg class="c"><use href="#ch2"/></svg><svg class="i"><use href="#drv"/></svg><span style="letter-spacing:-.17px">K Drive 2 TB Hitachi Backup (K:)</span></div>
<div class="n"><svg class="c"><use href="#ch2"/></svg><svg class="i"><use href="#drv"/></svg><span style="letter-spacing:-.3px">USB Drive (L:)</span></div>
<div class="n"><svg class="c"><use href="#ch2"/></svg><svg class="i"><use href="#drvn"/></svg><span style="letter-spacing:-.76px">MEMORYCARD (\\EPSON9B17B7) (M:)</span></div>
<div class="n s"><svg class="c"><use href="#ch2"/></svg><svg class="i" viewBox="0 0 20 20"><path d="M2 4h6l2 2h8v4H2z" fill="#f6d877"/><path d="M2 8h17v11H2z" fill="#f6d877"/><path d="M4 10h13v8h-3v-4H7v4H4z" fill="#2ba0d6"/></svg><span>Libraries</span></div>
<div class="n s"><svg class="c" style="width:12px;height:8px;top:10px;left:19px" viewBox="0 0 12 8"><path d="M1 1l5 5 5-5" fill="none" stroke="#333" stroke-width="1.800"/></svg><svg class="i"><use href="#drv"/></svg><span style="letter-spacing:-.35px">CANON_DC (H:)</span></div>
<div class="n"><svg class="c"><use href="#ch2"/></svg><svg class="i"><use href="#fld"/></svg><span style="letter-spacing:-.4px">CHDK</span></div>
<div class="n"><svg class="i"><use href="#fld"/></svg><span style="letter-spacing:-.25px">DCIM</span></div>
<div class="n s"><svg class="c"><use href="#ch2"/></svg><svg class="i"><use href="#drv"/></svg><span style="letter-spacing:-.24px">USB Drive (I:)</span></div>
<div class="n s"><svg class="c"><use href="#ch2"/></svg><svg class="i"><use href="#drv"/></svg><span style="letter-spacing:-.4px">USB Drive (J:)</span></div>
<div class="n s"><svg class="c"><use href="#ch2"/></svg><svg class="i"><use href="#drv"/></svg><span style="letter-spacing:-.3px">USB Drive (L:)</span></div>
<div class="n s"><svg class="c"><use href="#ch2"/></svg><svg class="i" viewBox="0 0 20 20"><path d="M4 4l6-1 8 2v9l-8 4-7-4z" fill="#2ba0e0"/><path d="M4 5l10 1-3 6-7-1z" fill="#bfe3f5"/><path d="M9 9l9-3v6l-8 5z" fill="#1f7fc8"/></svg><span style="letter-spacing:.4px">Network</span></div>
<div class="n s"><svg class="c"><use href="#ch2"/></svg><svg class="i" viewBox="0 0 20 20"><circle cx="3" cy="8" r="2.500" fill="#1e7cc9"/><circle cx="13" cy="3.500" r="2.500" fill="#38a84a"/><path d="M7 9l7-3 3 6-3 5-5-2z" fill="#1aa0a8"/><circle cx="13" cy="15" r="3" fill="#1e7cc9"/></svg><span style="letter-spacing:.47px">Homegroup</span></div>
</div>
<div class="p" style="left:1263px;top:259px;width:19px;height:630px;background:#f0f0f0"></div>
<div class="p" style="left:1263px;top:533px;width:19px;height:257px;background:#cdcdcd"></div>
<svg style="left:1266px;top:266px" width="13" height="9"><path d="M2 7l4.500-4.500L11 7" fill="none" stroke="#444" stroke-width="2"/></svg>
<svg style="left:1266px;top:875px" width="13" height="9"><path d="M2 2l4.500 4.500L11 2" fill="none" stroke="#444" stroke-width="2"/></svg>
<div class="t" style="left:1090px;top:895px;font-size:14.5px;color:#555">17 items</div>
<div class="t hd" style="left:1309px;top:267px;font-size:14.5px">Name</div>
<div class="t hd" style="left:1563px;top:267px">Type</div>
<div class="t hd" style="left:1673px;top:267px">Total Size</div>
<div class="t hd" style="left:1773px;top:267px">Free Space</div>
<svg style="left:1422px;top:259px" width="14" height="8"><path d="M2 6l5-5 5 5" fill="none" stroke="#aaa"/></svg>
<div class="ln" style="left:1555px;top:259px;width:1px;height:32px"></div>
<div class="ln" style="left:1665px;top:259px;width:1px;height:32px"></div>
<div class="ln" style="left:1765px;top:259px;width:1px;height:32px"></div>
<div class="ln" style="left:1871px;top:259px;width:1px;height:32px"></div>
<svg style="left:1297px;top:310px" width="12" height="8"><path d="M1 1l5 5 5-5" fill="none" stroke="#7a8aa0" stroke-width="1.100"/></svg>
<div class="t grp" style="left:1314px;top:304px">Folders (7)</div>
<div class="ln" style="left:1393px;top:313px;width:490px"></div>
<svg style="left:1297px;top:534px" width="12" height="8"><path d="M1 1l5 5 5-5" fill="none" stroke="#7a8aa0" stroke-width="1.100"/></svg>
<div class="t grp" style="left:1314px;top:528px">Devices and drives (9)</div>
<div class="ln" style="left:1468px;top:537px;width:415px"></div>
<svg style="left:1297px;top:812px" width="12" height="8"><path d="M1 1l5 5 5-5" fill="none" stroke="#7a8aa0" stroke-width="1.100"/></svg>
<div class="t grp" style="left:1314px;top:806px;letter-spacing:.23px">Network locations (1)</div>
<div class="ln" style="left:1464px;top:815px;width:419px"></div>
<svg style="left:1310px;top:334px" width="20" height="20"><use href="#f3"/></svg>
<svg style="left:1310px;top:361px" width="20" height="20"><use href="#fd"/></svg>
<svg style="left:1310px;top:388px" width="20" height="20"><use href="#fdoc"/></svg>
<svg style="left:1310px;top:415px" width="20" height="20"><use href="#fdn"/></svg>
<svg style="left:1310px;top:442px" width="20" height="20"><use href="#fm"/></svg>
<svg style="left:1310px;top:469px" width="20" height="20"><use href="#fp"/></svg>
<svg style="left:1310px;top:496px" width="20" height="20"><use href="#fv"/></svg>
<svg style="left:1310px;top:558px" width="20" height="20"><use href="#sam"/></svg>
<svg style="left:1310px;top:585px" width="20" height="20"><use href="#cd"/></svg>
<svg style="left:1310px;top:612px" width="20" height="20"><use href="#drv"/></svg>
<svg style="left:1310px;top:639px" width="20" height="20"><use href="#drv"/></svg>
<svg style="left:1310px;top:666px" width="20" height="20"><use href="#drv"/></svg>
<svg style="left:1310px;top:693px" width="20" height="20"><use href="#drv"/></svg>
<svg style="left:1310px;top:720px" width="20" height="20"><use href="#drv"/></svg>
<svg style="left:1310px;top:747px" width="20" height="20"><use href="#drv"/></svg>
<svg style="left:1310px;top:774px" width="20" height="20"><use href="#drv"/></svg>
<svg style="left:1310px;top:836px" width="20" height="20"><use href="#drvn"/></svg>
<div class="t it" style="top:335px">3D Objects</div><div class="t ty" style="top:335px">System Folder</div>
<div class="t it" style="top:362px;letter-spacing:.1px">Desktop</div><div class="t ty" style="top:362px">System Folder</div>
<div class="t it" style="top:389px;letter-spacing:.1px">Documents</div><div class="t ty" style="top:389px">System Folder</div>
<div class="t it" style="top:416px;letter-spacing:.29px">Downloads</div><div class="t ty" style="top:416px">System Folder</div>
<div class="t it" style="top:443px">Music</div><div class="t ty" style="top:443px">System Folder</div>
<div class="t it" style="top:470px;letter-spacing:-.3px">Pictures</div><div class="t ty" style="top:470px">System Folder</div>
<div class="t it" style="top:497px">Videos</div><div class="t ty" style="top:497px">System Folder</div>
<div class="t it" style="top:559px;letter-spacing:-.46px">Samsung 500 GB SSD (C:)</div><div class="t ty" style="top:559px">Local Disk</div><div class="t sz" style="top:559px">465 GB</div><div class="t fr" style="top:559px">152 GB</div>
<div class="t it" style="top:586px;letter-spacing:-.1px">DVD RW Drive (D:)</div><div class="t ty" style="top:586px">CD Drive</div><div class="t sz" style="top:586px">4.37 GB</div><div class="t fr" style="top:586px">4.37 GB</div>
<div class="t it" style="top:613px;letter-spacing:-.65px">OCZ SSD (E:)</div><div class="t ty" style="top:613px">Local Disk</div><div class="t sz" style="top:613px">103 GB</div><div class="t fr" style="top:613px">93.3 GB</div>
<div class="t it" style="top:640px">System Reserved (F:)</div><div class="t ty" style="top:640px">Local Disk</div><div class="t sz" style="top:640px">99.9 MB</div><div class="t fr" style="top:640px">66.0 MB</div>
<div class="t it" style="top:667px;letter-spacing:-.35px">CANON_DC (H:)</div><div class="t ty" style="top:667px;letter-spacing:-.18px">USB Drive</div><div class="t sz" style="top:667px">7.39 GB</div><div class="t fr" style="top:667px">7.38 GB</div>
<div class="t it" style="top:694px;letter-spacing:-.27px">USB Drive (I:)</div><div class="t ty" style="top:694px;letter-spacing:-.18px">USB Drive</div>
<div class="t it" style="top:721px;letter-spacing:-.43px">USB Drive (J:)</div><div class="t ty" style="top:721px;letter-spacing:-.18px">USB Drive</div>
<div class="t it" style="top:748px;letter-spacing:-.05px">K Drive 2 TB Hitachi Backup (K:)</div><div class="t ty" style="top:748px">Local Disk</div><div class="t sz" style="top:748px">1.81 TB</div><div class="t fr" style="top:748px">418 GB</div>
<div class="t it" style="top:775px;letter-spacing:-.34px">USB Drive (L:)</div><div class="t ty" style="top:775px;letter-spacing:-.18px">USB Drive</div>
<div class="t it" style="top:837px;letter-spacing:-.46px">MEMORYCARD (\\EPSON9B17...</div><div class="t ty" style="top:837px">Network Dri...</div><div class="t sz" style="top:837px;letter-spacing:0">0 bytes</div><div class="t fr" style="top:837px;letter-spacing:0">0 bytes</div>
<div class="p" style="left:1831px;top:890px;width:28px;height:29px;background:#cce8ff;border:1px solid #7db8d8;box-sizing:border-box"></div>
<svg style="left:1836px;top:897px" width="48" height="16" viewBox="0 0 48 16"><path d="M1.500 1.500h4v4h-4zM1.500 6.500h4v4h-4zM1.500 11.500h4v4h-4z" fill="#fff" stroke="#555" stroke-width=".8"/><path d="M7 3.500h12M7 8.500h12M7 13.500h12" stroke="#666" stroke-dasharray="3 1"/><rect x="28.500" y="1.500" width="17" height="12" fill="#cfe3f7" stroke="#777"/><path d="M29 9l6-2 10 3v3H29z" fill="#2f6d63"/></svg>
</body></html>
